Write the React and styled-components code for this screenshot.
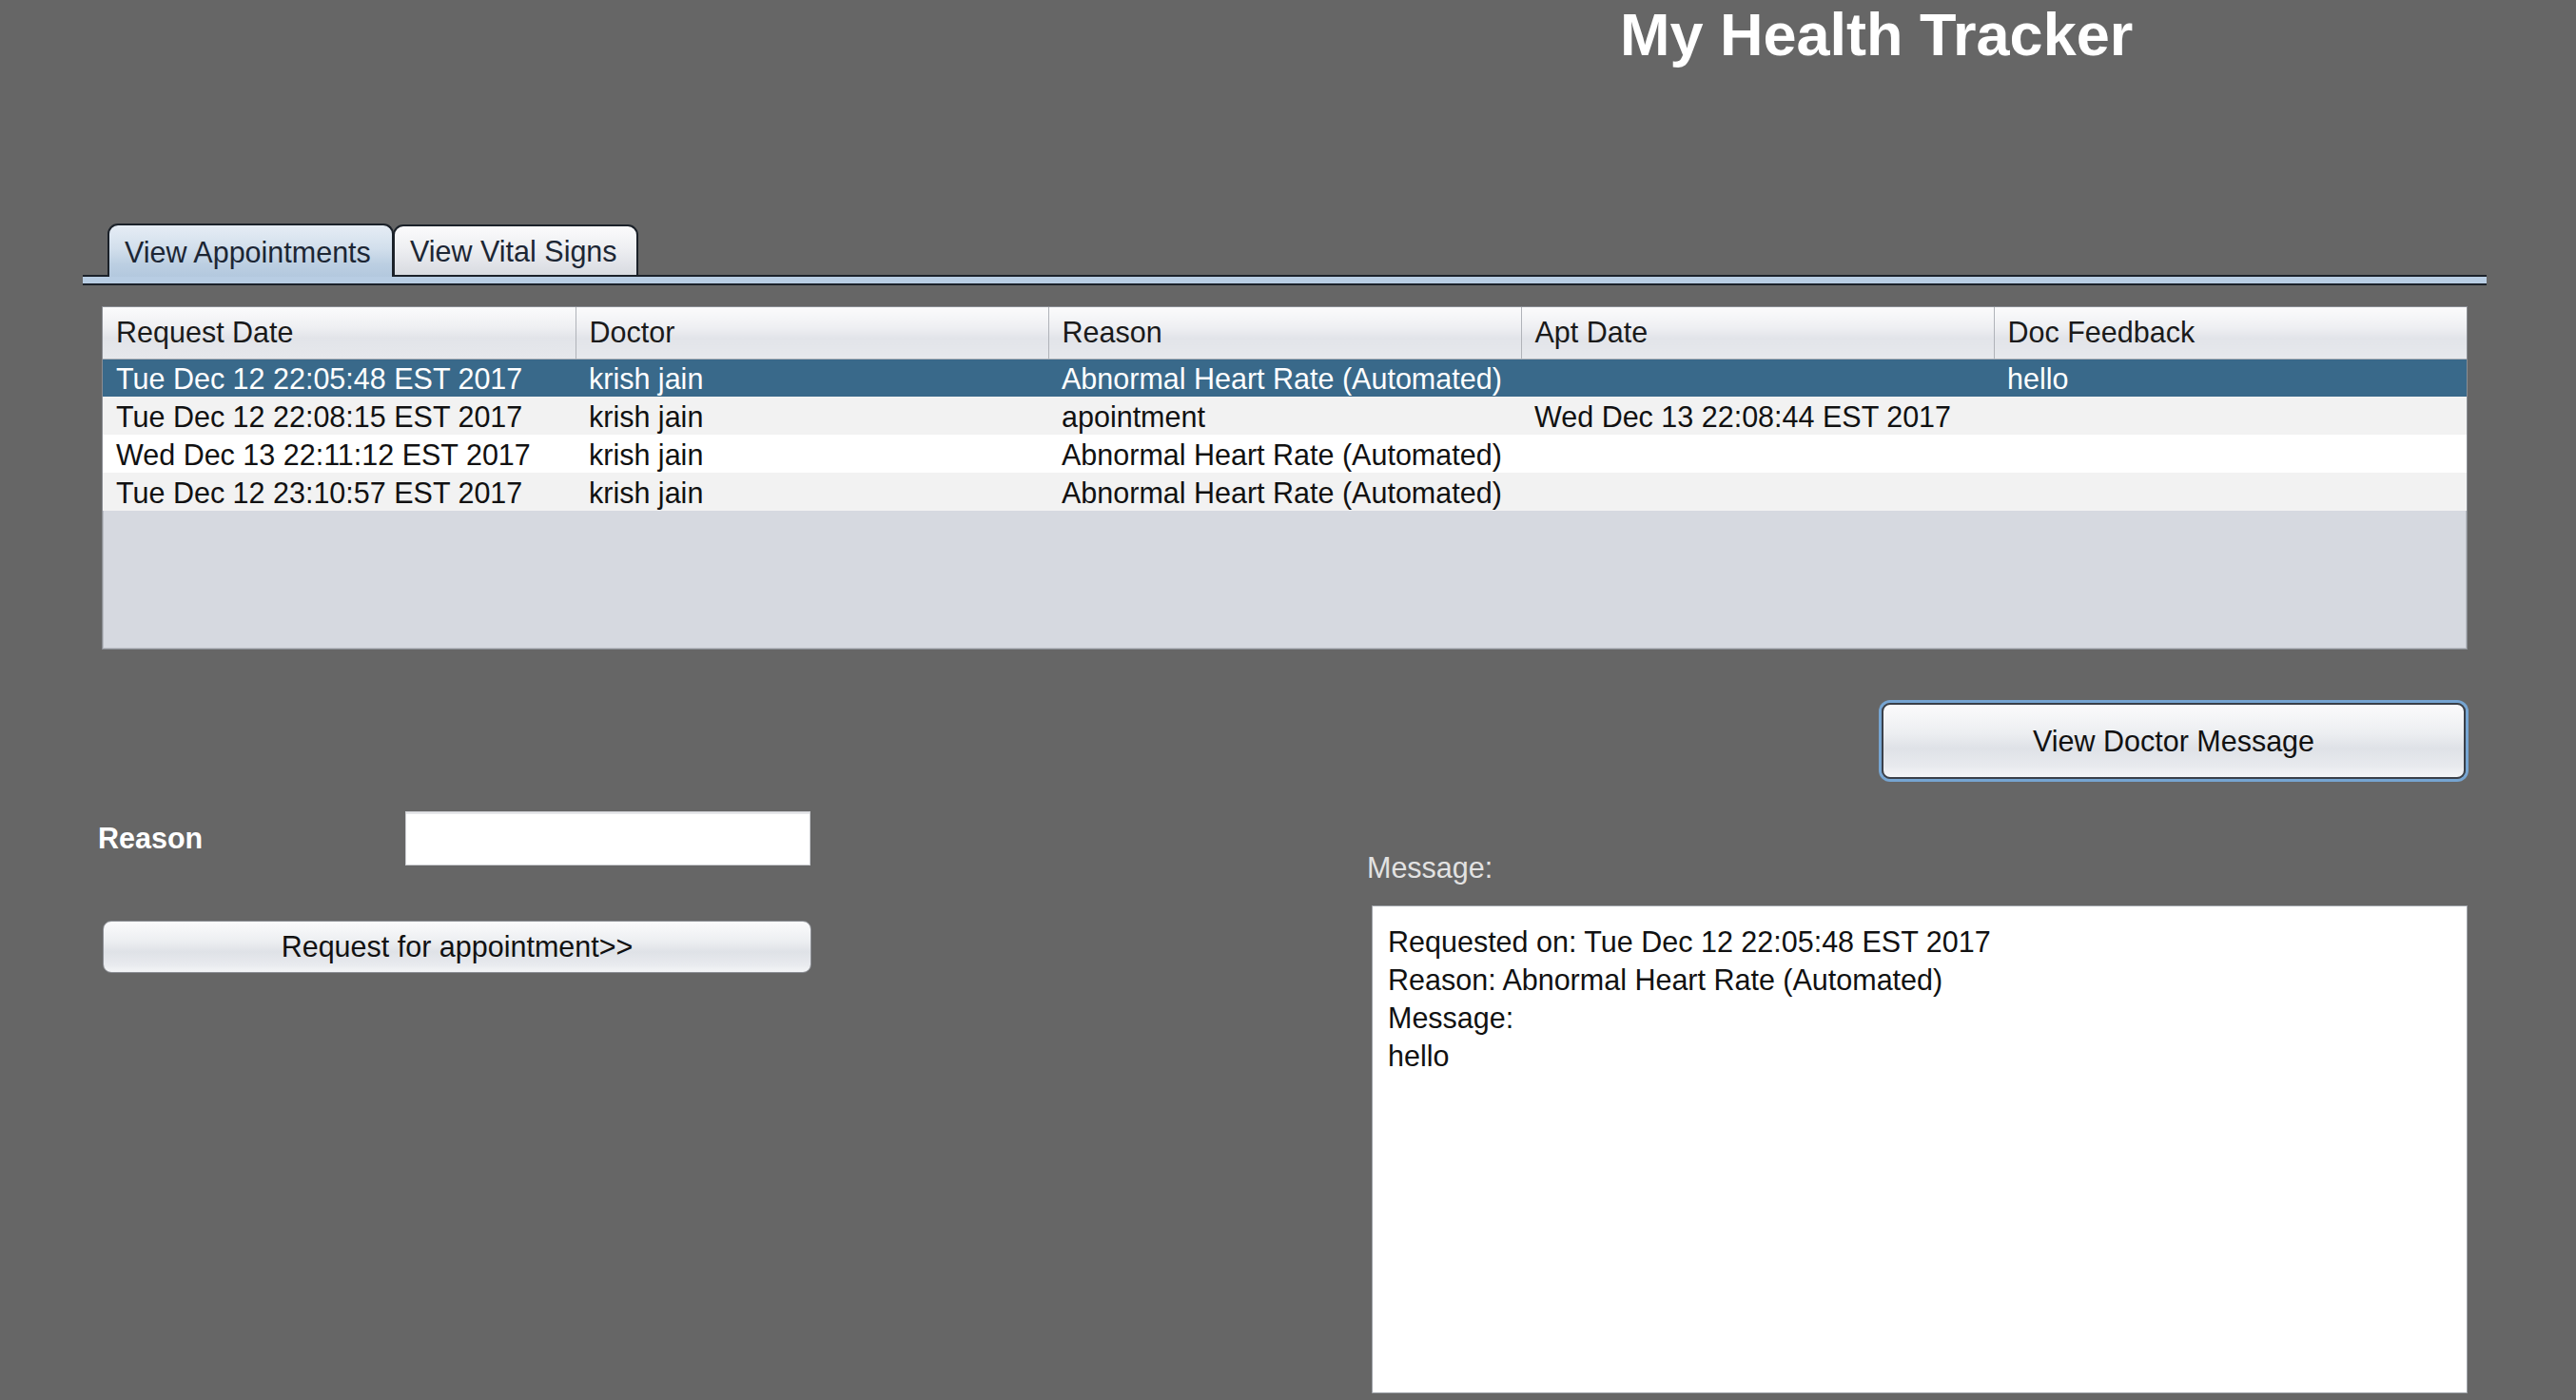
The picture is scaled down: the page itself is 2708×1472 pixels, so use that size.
import React from 'react';
import styled, { createGlobalStyle } from 'styled-components';

const Global = createGlobalStyle`
  html, body { margin: 0; padding: 0; background: #666666; }
  body { font-family: "Liberation Sans", Arial, sans-serif; overflow: hidden; }
  * { box-sizing: border-box; }
`;

const DARK = '#1b2129';
const FONT = '30.5px';

const Page = styled.div`
  width: 2708px;
  height: 1472px;
  background: #666666;
  display: flex;
  flex-direction: column;
`;

const TitleBar = styled.header`
  height: 235px;
  padding: 5px 0 0 1703px;
`;

const Title = styled.h1`
  margin: 0;
  font-size: 63px;
  line-height: 63px;
  font-weight: 700;
  color: #ffffff;
  white-space: nowrap;
`;

const TabArea = styled.div`
  margin-left: 87px;
  width: 2527px;
`;

const TabRow = styled.div`
  display: flex;
  align-items: flex-end;
  height: 56px;
`;

const TabLine = styled.div`
  height: 2px;
  background: ${DARK};
  flex: ${p => (p.$w ? `0 0 ${p.$w}px` : '1 1 auto')};
`;

const Tab = styled.div`
  width: ${p => p.$w}px;
  height: ${p => (p.$active ? 56 : 55)}px;
  padding: 2px 0 0 16px;
  display: flex;
  align-items: center;
  font-size: ${FONT};
  color: #1c2634;
  white-space: nowrap;
  border: 2px solid ${DARK};
  border-bottom: ${p => (p.$active ? 'none' : `2px solid ${DARK}`)};
  border-radius: 11px 11px 0 0;
  margin-left: ${p => (p.$first ? 0 : '-1px')};
  background: ${p =>
    p.$active
      ? 'linear-gradient(#e6edf5 0%, #d2dfec 45%, #bccfe2 75%, #b3c8de 100%)'
      : 'linear-gradient(#fbfbfc 0%, #eeeff2 45%, #e0e2e7 80%, #d8dbe0 100%)'};
`;

const TabStrip = styled.div`
  height: 9px;
  background: #b8cde3;
  border-bottom: 2px solid ${DARK};
`;

const Content = styled.div`
  padding-left: 107px;
  width: 2594px;
`;

const TablePanel = styled.div`
  margin-top: 22px;
  height: 361px;
  background: #d6d9e0;
  border: 1px solid #8a8d93;
  box-shadow: inset 0 0 0 1px #b9bcc3;
  overflow: hidden;
`;

const Grid = styled.table`
  width: 100%;
  table-layout: fixed;
  border-collapse: collapse;
  font-size: ${FONT};
`;

const HeadCell = styled.th`
  height: 54px;
  padding: 0 0 0 14px;
  text-align: left;
  font-weight: 400;
  color: #1a1a1a;
  white-space: nowrap;
  background: linear-gradient(#fbfbfc 0%, #eeeff2 40%, #e2e4e9 60%, #e6e8ec 100%);
  border-right: ${p => (p.$last ? 'none' : '1px solid #b0b3b9')};
  border-bottom: 1px solid #aeb1b7;
`;

const Row = styled.tr`
  height: 40px;
  background: ${p => (p.$selected ? '#39698a' : p.$alt ? '#f2f2f2' : '#ffffff')};
  color: ${p => (p.$selected ? '#ffffff' : '#111111')};
`;

const Cell = styled.td`
  padding: 3px 0 0 14px;
  white-space: nowrap;
  overflow: hidden;
`;

const Lower = styled.div`
  display: grid;
  grid-template-columns: 746px 1157px;
  column-gap: 584px;
`;

const LeftCol = styled.div`
  padding-top: 170px;
  display: flex;
  flex-direction: column;
`;

const ReasonRow = styled.div`
  display: flex;
  align-items: center;
  height: 57px;
`;

const FieldLabel = styled.label`
  width: 323px;
  margin-left: -4px;
  font-size: ${FONT};
  font-weight: 700;
  color: #ffffff;
`;

const TextInput = styled.div`
  width: 426px;
  height: 57px;
  background: #ffffff;
  border: 1px solid #c9cbcf;
  box-shadow: inset 0 2px 0 #e6e7ea;
`;

const GlossButton = styled.button`
  display: flex;
  align-items: center;
  justify-content: center;
  font-family: "Liberation Sans", Arial, sans-serif;
  font-size: ${FONT};
  color: #111111;
  cursor: pointer;
  border-radius: 9px;
  background: linear-gradient(#fbfbfc 0%, #eceef1 40%, #dfe2e7 60%, #e8eaee 85%, #f4f5f7 100%);
  border: ${p => (p.$focused ? '2px solid #3a4049' : '1.5px solid #8b8e94')};
  box-shadow: ${p => (p.$focused ? '0 0 0 3px #76a5d2' : 'none')};
  width: ${p => p.$w}px;
  height: ${p => p.$h}px;
  padding: 0;
`;

const RequestButton = styled(GlossButton)`
  margin-top: 58px;
  margin-left: 1px;
`;

const RightCol = styled.div`
  display: flex;
  flex-direction: column;
`;

const ButtonRow = styled.div`
  display: flex;
  justify-content: flex-end;
  margin-top: 56px;
  padding-right: 2px;
`;

const MessageLabel = styled.div`
  margin-top: 73px;
  height: 40px;
  line-height: 40px;
  font-size: ${FONT};
  color: #e2e2e2;
`;

const MessageBox = styled.div`
  margin-top: 20px;
  margin-left: 5px;
  width: 1152px;
  height: 513px;
  background: #ffffff;
  border: 1px solid #9fa3a9;
  padding: 17px 16px;
  font-size: ${FONT};
  line-height: 40px;
  color: #111111;
`;

const Line = styled.div`
  white-space: nowrap;
`;

const columns = ['Request Date', 'Doctor', 'Reason', 'Apt Date', 'Doc Feedback'];

const rows = [
  ['Tue Dec 12 22:05:48 EST 2017', 'krish jain', 'Abnormal Heart Rate (Automated)', '', 'hello'],
  ['Tue Dec 12 22:08:15 EST 2017', 'krish jain', 'apointment', 'Wed Dec 13 22:08:44 EST 2017', ''],
  ['Wed Dec 13 22:11:12 EST 2017', 'krish jain', 'Abnormal Heart Rate (Automated)', '', ''],
  ['Tue Dec 12 23:10:57 EST 2017', 'krish jain', 'Abnormal Heart Rate (Automated)', '', ''],
];

const message = [
  'Requested on: Tue Dec 12 22:05:48 EST 2017',
  'Reason: Abnormal Heart Rate (Automated)',
  'Message:',
  'hello',
];

export default function App() {
  return (
    <Page>
      <Global />
      <TitleBar>
        <Title>My Health Tracker</Title>
      </TitleBar>

      <TabArea>
        <TabRow>
          <TabLine $w={26} />
          <Tab $active $first $w={301}>View Appointments</Tab>
          <Tab $w={258}>View Vital Signs</Tab>
          <TabLine />
        </TabRow>
        <TabStrip />
      </TabArea>

      <Content>
        <TablePanel>
          <Grid>
            <thead>
              <tr>
                {columns.map((c, i) => (
                  <HeadCell key={c} $last={i === columns.length - 1}>{c}</HeadCell>
                ))}
              </tr>
            </thead>
            <tbody>
              {rows.map((r, i) => (
                <Row key={i} $selected={i === 0} $alt={i % 2 === 1}>
                  {r.map((v, j) => (
                    <Cell key={j}>{v}</Cell>
                  ))}
                </Row>
              ))}
            </tbody>
          </Grid>
        </TablePanel>

        <Lower>
          <LeftCol>
            <ReasonRow>
              <FieldLabel>Reason</FieldLabel>
              <TextInput />
            </ReasonRow>
            <RequestButton $w={745} $h={55}>Request for appointment&gt;&gt;</RequestButton>
          </LeftCol>

          <RightCol>
            <ButtonRow>
              <GlossButton $focused $w={614} $h={80}>View Doctor Message</GlossButton>
            </ButtonRow>
            <MessageLabel>Message:</MessageLabel>
            <MessageBox>
              {message.map((m, i) => (
                <Line key={i}>{m}</Line>
              ))}
            </MessageBox>
          </RightCol>
        </Lower>
      </Content>
    </Page>
  );
}
